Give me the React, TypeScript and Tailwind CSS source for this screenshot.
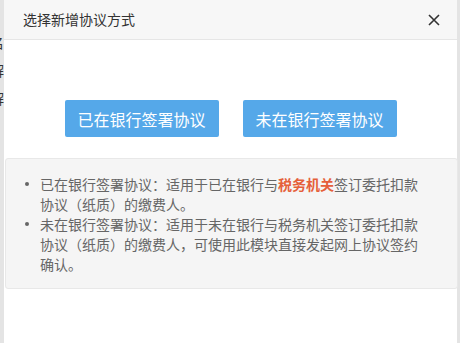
export default function App() {
  return (
    <div className="w-[460px] h-[343px] flex bg-[#e4e4e4] overflow-hidden font-['Noto_Sans_CJK_SC','Noto_Sans',sans-serif]">
      {/* page behind the dialog */}
      <div className="w-[4px] shrink-0 overflow-hidden pt-[34px] flex flex-col gap-[12px] text-[14px] text-[#333] leading-[16px]">
        <span className="ml-[-10px]">名</span>
        <span className="ml-[-10px]">解</span>
        <span className="ml-[-10px]">解</span>
      </div>

      {/* DIALOG */}
      <div className="flex-1 bg-white flex flex-col">
        <div className="h-[40px] shrink-0 bg-[#f7f7f7] border-b border-[#e6e6e6] flex items-center justify-between pl-[19px] pr-[17px]">
          <span className="text-[14px] text-[#333]">选择新增协议方式</span>
          <svg width="12" height="12" viewBox="0 0 12 12" className="text-[#333]">
            <path d="M1 1 L11 11 M11 1 L1 11" stroke="currentColor" strokeWidth="1.6" fill="none" />
          </svg>
        </div>

        {/* BUTTONS */}
        <div className="flex justify-center gap-[24px] mt-[60px]">
          <button className="w-[154px] h-[37px] rounded-[2px] bg-[#55a8e9] text-white text-[16px]">已在银行签署协议</button>
          <button className="w-[154px] h-[37px] rounded-[2px] bg-[#55a8e9] text-white text-[16px]">未在银行签署协议</button>
        </div>

        {/* NOTES */}
        <div className="mt-[21px] ml-[1px] mr-[-1px] h-[131px] bg-[#f5f5f5] border border-[#e8e8e8] rounded-[3px] pt-[15px] pl-[18px] text-[14px] leading-[20px] text-[#666] whitespace-nowrap">
          <ul>
            <li className="flex">
              <span className="w-[16px] h-[20px] shrink-0 flex items-center pl-[1px]">
                <span className="w-[4px] h-[4px] rounded-full bg-[#666]" />
              </span>
              <span>
                已在银行签署协议：适用于已在银行与<span className="text-[#e5603a] font-bold">税务机关</span>签订委托扣款
                <br />
                协议（纸质）的缴费人。
              </span>
            </li>
            <li className="flex">
              <span className="w-[16px] h-[20px] shrink-0 flex items-center pl-[1px]">
                <span className="w-[4px] h-[4px] rounded-full bg-[#666]" />
              </span>
              <span>
                未在银行签署协议：适用于未在银行与税务机关签订委托扣款
                <br />
                协议（纸质）的缴费人，可使用此模块直接发起网上协议签约
                <br />
                确认。
              </span>
            </li>
          </ul>
        </div>
      </div>
      <div className="w-[3px] shrink-0" />
    </div>
  );
}
